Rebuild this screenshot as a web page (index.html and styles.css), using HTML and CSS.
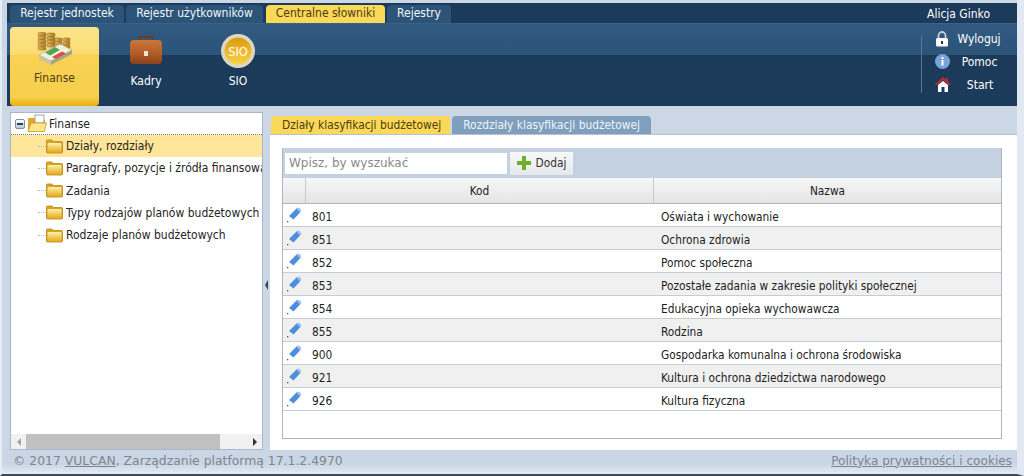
FILE: index.html
```html
<!DOCTYPE html>
<html lang="pl">
<head>
<meta charset="utf-8">
<title>Centralne słowniki</title>
<link rel="stylesheet" href="styles.css">
</head>
<body>
<div class="page">
  <header class="head">
    <div class="tabbar">
      <nav class="toptabs">
        <a class="toptab w1">Rejestr jednostek</a>
        <a class="toptab w2">Rejestr użytkowników</a>
        <a class="toptab w3 on">Centralne słowniki</a>
        <a class="toptab w4">Rejestry</a>
      </nav>
      <div class="user">Alicja Ginko</div>
    </div>
    <div class="ribbon">
      <div class="apps">
        <a class="app active">
          <svg class="appicon" width="36" height="33" viewBox="0 0 36 33">
            <defs><linearGradient id="gold" x1="0" y1="0" x2="1" y2="0"><stop offset="0" stop-color="#e2b85a"/><stop offset="1" stop-color="#a9782a"/></linearGradient></defs>
            <g fill="url(#gold)" stroke="#8a6420" stroke-width=".5">
              <rect x="1" y="0.500" width="8" height="3.500" rx="1.500"/><rect x="1" y="4" width="8" height="3.500" rx="1.500"/><rect x="1" y="7.500" width="8" height="3.500" rx="1.500"/><rect x="1" y="11" width="8" height="3.500" rx="1.500"/><rect x="1" y="14.500" width="8" height="3.500" rx="1.500"/>
              <rect x="10" y="1" width="8" height="3.500" rx="1.500"/><rect x="10" y="4.500" width="8" height="3.500" rx="1.500"/><rect x="10" y="8" width="8" height="3.500" rx="1.500"/><rect x="10" y="11.500" width="8" height="3.500" rx="1.500"/>
              <rect x="18" y="6" width="7" height="3.500" rx="1.500"/><rect x="18" y="9.500" width="7" height="3.500" rx="1.500"/><rect x="26" y="6" width="7" height="3.500" rx="1.500"/><rect x="26" y="9.500" width="7" height="3.500" rx="1.500"/><rect x="26" y="13" width="7" height="3.500" rx="1.500"/>
            </g>
            <path d="M2 23 L23 12 L35 18 L14 29 Z" fill="#f3f1dd" stroke="#9a9a7c" stroke-width=".5"/>
            <path d="M2 23 L14 29 V33 L2 27 Z" fill="#c9c5a2"/>
            <path d="M14 29 L35 18 V22 L14 33 Z" fill="#a6a686"/>
            <path d="M8 20.500 L18 15 L23 18 L13 23.500 Z" fill="#4fa654"/>
            <path d="M15 25 L25 19.500 L29 21.500 L19 27 Z" fill="#d9504a"/>
          </svg>
          <span>Finanse</span>
        </a>
        <a class="app">
          <svg class="appicon bag" width="34" height="28" viewBox="0 0 34 28">
            <defs><linearGradient id="bagg" x1="0" y1="0" x2="0" y2="1"><stop offset="0" stop-color="#c9773a"/><stop offset=".5" stop-color="#b5602a"/><stop offset="1" stop-color="#8b431b"/></linearGradient></defs>
            <path d="M10 6 V3 Q10 1 12 1 H22 Q24 1 24 3 V6" fill="none" stroke="#6e3a18" stroke-width="2"/>
            <rect x="1" y="4" width="32" height="24" rx="4" fill="url(#bagg)"/>
            <rect x="15" y="15" width="4" height="5" fill="#f3e3cf"/>
          </svg>
          <span>Kadry</span>
        </a>
        <a class="app">
          <svg class="appicon" width="34" height="34" viewBox="0 0 34 34">
            <defs><linearGradient id="coin" x1="0" y1="0" x2="0" y2="1"><stop offset="0" stop-color="#d99a0e"/><stop offset=".55" stop-color="#f0b92a"/><stop offset="1" stop-color="#f7d348"/></linearGradient></defs>
            <circle cx="17" cy="17" r="17" fill="#dcd8c6"/>
            <circle cx="17" cy="17" r="13.500" fill="url(#coin)"/>
            <text x="17" y="21.500" text-anchor="middle" class="siotext">SIO</text>
          </svg>
          <span>SIO</span>
        </a>
      </div>
      <div class="links">
        <a class="link">
          <svg width="14" height="16" viewBox="0 0 14 16"><path d="M3.500 8 V4.500 A3.500 3.500 0 0 1 10.500 4.500 V8" fill="none" stroke="#c8ccd2" stroke-width="1.800"/><rect x="1" y="7" width="12" height="8.500" rx="1.500" fill="#fff"/><rect x="6" y="10" width="2" height="3" fill="#333"/></svg>
          <span class="lbl">Wyloguj</span>
        </a>
        <a class="link">
          <svg width="15" height="15" viewBox="0 0 15 15"><circle cx="7.500" cy="7.500" r="7.500" fill="#7ba3d8"/><rect x="6.500" y="6" width="2" height="5.500" fill="#fff"/><rect x="6.500" y="3" width="2" height="2" fill="#fff"/></svg>
          <span class="lbl">Pomoc</span>
        </a>
        <a class="link">
          <svg width="16" height="15" viewBox="0 0 16 15"><path d="M8 0 L16 7.500 L14 8 L8 3 L2 8 L0 7.500 Z" fill="#c8272c"/><path d="M11 1 H13 V4 L11 3 Z" fill="#c8272c"/><path d="M3 8 L8 4 L13 8 V15 H9.500 V10 H6.500 V15 H3 Z" fill="#fff"/></svg>
          <span class="lbl">Start</span>
        </a>
      </div>
    </div>
  </header>

  <main class="body">
    <aside class="tree">
      <div class="treelist">
        <div class="node root">
          <span class="toggle"></span>
          <svg width="20" height="19" viewBox="0 0 20 19"><path d="M1 17 V5 Q1 4 2 4 H7 L9 6 H18 V17 Z" fill="#dfa82c"/><rect x="8" y="1" width="9" height="8" fill="#fff" stroke="#8a8a8a" stroke-width=".8"/><path d="M1 17.500 L4 9 H19.500 L17.500 17.500 Z" fill="#fde58a" stroke="#c9952a" stroke-width=".8"/></svg>
          <span>Finanse</span>
        </div>
        <div class="node leaf sel"><i class="dash"></i><svg class="folder" width="17" height="15" viewBox="0 0 17 15"><use href="#fld"/></svg><span>Działy, rozdziały</span></div>
        <div class="node leaf"><i class="dash"></i><svg class="folder" width="17" height="15" viewBox="0 0 17 15"><use href="#fld"/></svg><span>Paragrafy, pozycje i źródła finansowania</span></div>
        <div class="node leaf"><i class="dash"></i><svg class="folder" width="17" height="15" viewBox="0 0 17 15"><use href="#fld"/></svg><span>Zadania</span></div>
        <div class="node leaf"><i class="dash"></i><svg class="folder" width="17" height="15" viewBox="0 0 17 15"><use href="#fld"/></svg><span>Typy rodzajów planów budżetowych</span></div>
        <div class="node leaf"><i class="dash"></i><svg class="folder" width="17" height="15" viewBox="0 0 17 15"><use href="#fld"/></svg><span>Rodzaje planów budżetowych</span></div>
      </div>
      <div class="hscroll">
        <span class="arrow left"></span>
        <div class="track"><div class="thumb"></div></div>
        <span class="arrow right"></span>
      </div>
    </aside>
    <div class="split"><span class="grip"></span></div>
    <section class="content">
      <div class="tabs">
        <a class="tab on">Działy klasyfikacji budżetowej</a>
        <a class="tab">Rozdziały klasyfikacji budżetowej</a>
      </div>
      <div class="panel">
        <div class="grid">
          <div class="toolbar">
            <input class="search" placeholder="Wpisz, by wyszukać">
            <button class="add"><svg width="14" height="14" viewBox="0 0 14 14"><path d="M5 0 H9 V5 H14 V9 H9 V14 H5 V9 H0 V5 H5 Z" fill="#6fae2e"/></svg>Dodaj</button>
          </div>
          <div class="row hdr"><div class="c0"></div><div class="c1">Kod</div><div class="c2">Nazwa</div></div>
          <div class="row"><div class="c0"><svg class="pen" width="17" height="17" viewBox="0 0 17 17"><use href="#pen"/></svg></div><div class="c1">801</div><div class="c2">Oświata i wychowanie</div></div>
          <div class="row alt"><div class="c0"><svg class="pen" width="17" height="17" viewBox="0 0 17 17"><use href="#pen"/></svg></div><div class="c1">851</div><div class="c2">Ochrona zdrowia</div></div>
          <div class="row"><div class="c0"><svg class="pen" width="17" height="17" viewBox="0 0 17 17"><use href="#pen"/></svg></div><div class="c1">852</div><div class="c2">Pomoc społeczna</div></div>
          <div class="row alt"><div class="c0"><svg class="pen" width="17" height="17" viewBox="0 0 17 17"><use href="#pen"/></svg></div><div class="c1">853</div><div class="c2">Pozostałe zadania w zakresie polityki społecznej</div></div>
          <div class="row"><div class="c0"><svg class="pen" width="17" height="17" viewBox="0 0 17 17"><use href="#pen"/></svg></div><div class="c1">854</div><div class="c2">Edukacyjna opieka wychowawcza</div></div>
          <div class="row alt"><div class="c0"><svg class="pen" width="17" height="17" viewBox="0 0 17 17"><use href="#pen"/></svg></div><div class="c1">855</div><div class="c2">Rodzina</div></div>
          <div class="row"><div class="c0"><svg class="pen" width="17" height="17" viewBox="0 0 17 17"><use href="#pen"/></svg></div><div class="c1">900</div><div class="c2">Gospodarka komunalna i ochrona środowiska</div></div>
          <div class="row alt"><div class="c0"><svg class="pen" width="17" height="17" viewBox="0 0 17 17"><use href="#pen"/></svg></div><div class="c1">921</div><div class="c2">Kultura i ochrona dziedzictwa narodowego</div></div>
          <div class="row"><div class="c0"><svg class="pen" width="17" height="17" viewBox="0 0 17 17"><use href="#pen"/></svg></div><div class="c1">926</div><div class="c2">Kultura fizyczna</div></div>
        </div>
      </div>
    </section>
  </main>

  <footer class="foot">
    <div class="copy">© 2017 <a class="flink">VULCAN</a>, Zarządzanie platformą 17.1.2.4970</div>
    <a class="flink">Polityka prywatności i cookies</a>
  </footer>
</div>
<svg class="defs" width="0" height="0">
  <defs>
    <linearGradient id="fg" x1="0" y1="0" x2="0" y2="1"><stop offset="0" stop-color="#fff0a8"/><stop offset="1" stop-color="#e3aa18"/></linearGradient>
    <g id="fld"><path d="M0.500 13 Q0.500 14 1.500 14 H15.500 Q16.500 14 16.500 13 V3.500 Q16.500 2.500 15.500 2.500 H7.500 L6 1 H1.500 Q0.500 1 0.500 2 Z" fill="#d9a520" stroke="#b9861a" stroke-width=".8"/><rect x="1.500" y="4" width="14" height="9.500" rx="1" fill="url(#fg)"/></g>
    <g id="pen"><path d="M4 10 L11.500 2.500 Q13 1 14.500 2.500 L15.500 3.500 Q16.500 5 15 6.500 L8.500 13.500 Z" fill="#4d8fdc"/><path d="M11.500 2.500 Q13 1 14.500 2.500 L15.500 3.500 Q16.500 5 15 6.500 Z" fill="#9cc4f2"/><rect x="2" y="15" width="1.300" height="1.300" fill="#555"/></g>
  </defs>
</svg>
</body>
</html>
```
FILE: styles.css
```css
* { box-sizing: border-box; }
html, body { margin: 0; height: 100%; overflow: hidden; background: #fff; }
body { font-family: "DejaVu Sans", "Noto Sans", sans-serif; font-stretch: condensed; font-size: 12px; color: #222; }
.page { width: 1024px; height: 476px; display: flex; flex-direction: column; background: #cbd7e5; border-left: 2px solid #e6edf5; border-right: 7px solid #e2e9f2; border-bottom: 2px solid #3c4a58; }
.defs { display: block; height: 0; }

.head { margin: 3px 0 0 5px; height: 103px; flex: none; background: #1c3a5a; }
.tabbar { height: 21px; display: flex; justify-content: space-between; align-items: flex-end; border-bottom: 1px solid #3a6288; }
.toptabs { display: flex; gap: 2px; padding-left: 3px; }
.toptab { height: 18px; line-height: 17px; text-align: center; color: #f2f6fa; background: #2c5378; border-radius: 4px 4px 0 0; }
.toptab.w1 { width: 114px; }
.toptab.w2 { width: 137px; margin-right: 1px; }
.toptab.w3 { width: 119px; }
.toptab.w4 { width: 64px; }
.toptab.on { background: #fbd857; color: #4a3d14; }
.user { color: #fff; width: 90px; line-height: 17px; }

.ribbon { height: 82px; display: flex; justify-content: space-between; background: linear-gradient(#325a80 0, #2c5378 31px, #1c3a5a 31px, #1c3a5a 100%); }
.apps { display: flex; padding: 3px 0 0 3px; }
.app { width: 92px; height: 79px; display: flex; flex-direction: column; align-items: center; color: #fff; padding-top: 7px; position: relative; }
.app span { position: absolute; top: 46px; line-height: 16px; }
.app.active { width: 89px; margin-right: 1px; color: #4a3d14; border-radius: 4px; padding-top: 5px; background: linear-gradient(#fde48b 0, #fbdc72 27px, #f9d254 28px, #f7cf4c 70px, #e8b410 78px); }
.app.active span { top: 43px; }
.bag { margin-top: 2px; }
.siotext { font: 11.500px "DejaVu Sans", sans-serif; fill: #fff; }

.links { width: 96px; margin-top: 12px; height: 57px; border-left: 1px solid #5d7892; display: flex; flex-direction: column; }
.link { height: 23px; flex: none; display: flex; align-items: center; padding-left: 13px; color: #fff; }
.link:first-child { margin-top: -9px; }
.link .lbl { flex: 1; text-align: center; padding-right: 8px; }
.link svg { flex: none; }

.body { flex: 1; min-height: 0; margin: 6px 0 0 8px; display: flex; }
.tree { width: 253px; display: flex; flex-direction: column; background: #fff; border: 1px solid #a9b6c6; }
.treelist { flex: 1; overflow: hidden; }
.node { height: 22.250px; display: flex; align-items: center; white-space: nowrap; overflow: hidden; color: #26241e; }
.root { padding-left: 4px; border-bottom: 1px dotted #777; height: 22px; }
.toggle { width: 10px; height: 10px; margin-right: 2px; border: 1px solid #7f8fa0; border-radius: 2px; background: linear-gradient(#fff, #b9c7d8); position: relative; flex: none; }
.toggle::after { content: ""; position: absolute; left: 1px; right: 1px; top: 3px; height: 2px; background: #2b3f55; }
.root svg { margin-right: 2px; flex: none; }
.leaf { padding-left: 27px; }
.dash { width: 8px; border-top: 1px dotted #bbb; flex: none; }
.folder { margin-right: 3px; flex: none; }
.sel { background: #ffe69b; }
.hscroll { height: 15px; display: flex; align-items: center; background: #f1f1f1; flex: none; }
.arrow { width: 15px; flex: none; display: flex; justify-content: center; }
.arrow::before { content: ""; border: 4px solid transparent; }
.left::before { border-right-color: #a3a3a3; border-left: 0; }
.right::before { border-left-color: #333; border-right: 0; }
.track { flex: 1; height: 15px; padding-right: 27px; }
.thumb { height: 100%; background: #c1c1c1; }

.split { width: 7px; display: flex; align-items: center; justify-content: center; }
.grip { width: 3px; height: 10px; border: 5px solid transparent; border-left: 0; border-right: 3px solid #33475c; margin-top: 8px; }

.content { flex: 1; display: flex; flex-direction: column; min-width: 0; }
.tabs { display: flex; gap: 2px; padding: 4px 0 0 1px; height: 22px; flex: none; font-size: 11.850px; }
.tab { height: 18px; line-height: 18px; padding: 0 11px; background: #7f9fbd; color: #eef3f8; border-radius: 4px 4px 0 0; }
.tab.on { background: #fbd857; color: #4a3d14; padding-right: 9px; }
.panel { flex: 1; background: #fff; border-top: 1px solid #b4c2d2; padding: 13px 15px 11px 12px; display: flex; min-height: 0; }
.grid { flex: 1; border: 1px solid #a9b6c6; border-top: 0; background: #fff; font-size: 11.800px; }
.toolbar { height: 30px; background: #c3d1e1; display: flex; align-items: center; padding: 0 2px; gap: 3px; }
.search { width: 222px; height: 21px; border: 0; padding: 0 4px; background: #fff; font: 12px "DejaVu Sans", sans-serif; color: #888; outline: 0; }
.search::placeholder { color: #8a8a8a; opacity: 1; }
.add { height: 23px; width: 63px; border: 0; padding: 0; background: linear-gradient(#f7f8f9, #e5e8ec); color: #333; font: 11.800px "DejaVu Sans", sans-serif; font-stretch: condensed; display: flex; align-items: center; justify-content: center; gap: 5px; }
.row { display: grid; grid-template-columns: 22px 348px 1fr; height: 23px; align-items: center; border-bottom: 1px solid #c6ccd2; color: #1d1d1d; }
.row.alt { background: #f0f0f0; }
.hdr { height: 26px; background: linear-gradient(#f7f7f7, #e4e4e4); border-bottom: 1px solid #b4b4b4; align-items: stretch; }
.hdr > div { display: flex; align-items: center; justify-content: center; border-left: 1px solid #c9c9c9; padding: 0; }
.hdr > .c0 { border-left: 0; }
.c1 { padding-left: 7px; padding-top: 3px; }
.c2 { padding-left: 8px; padding-top: 3px; }
.c0 { height: 100%; }
.pen { display: block; margin: 2px 0 0 2px; }

.foot { height: 24px; flex: none; padding: 0 5px 3px 11px; display: flex; justify-content: space-between; align-items: center; font: 12.100px "DejaVu Sans", sans-serif; color: #7f858c; background: linear-gradient(#c9d6e5, #c9d6e5 14px, #e4ebf3); }
.copy { font-size: 12.400px; }
.flink { text-decoration: underline; }
```
